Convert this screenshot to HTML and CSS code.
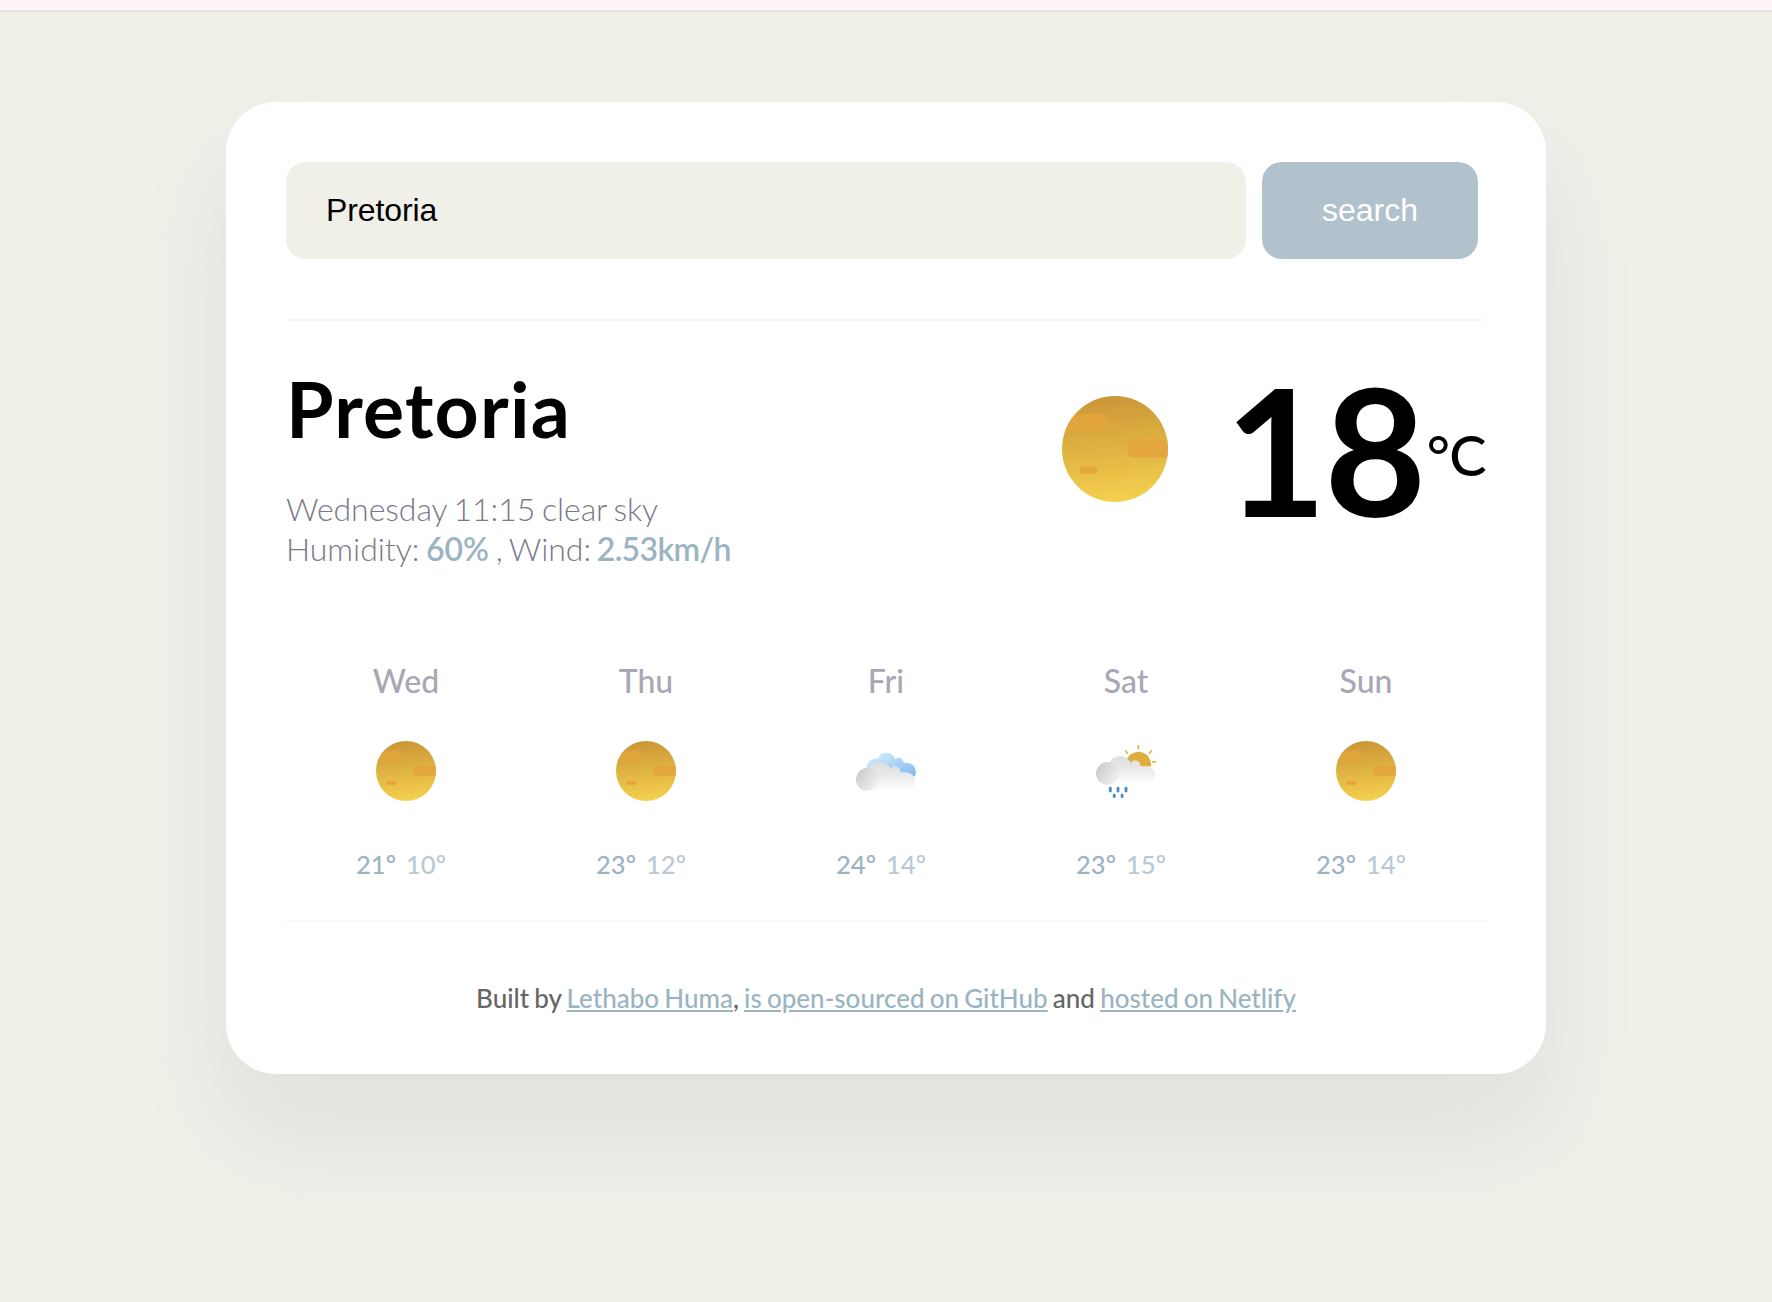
FILE: index.html
```
<!DOCTYPE html>
<html lang="en">
<head>
<meta charset="utf-8">
<title>Weather</title>
<link rel="stylesheet" href="styles.css">
</head>
<body>
<svg class="defs" width="0" height="0" aria-hidden="true">
  <defs>
    <linearGradient id="sun-fill" x1="0.45" y1="0" x2="0.55" y2="1">
      <stop offset="0" stop-color="#cb9637"/><stop offset="1" stop-color="#f5d14f"/>
    </linearGradient>
    <linearGradient id="sky-fill" gradientUnits="userSpaceOnUse" x1="28" y1="11" x2="44" y2="42">
      <stop offset="0" stop-color="#cde7fc"/><stop offset="1" stop-color="#80bced"/>
    </linearGradient>
    <linearGradient id="cloud-fill" gradientUnits="userSpaceOnUse" x1="0" y1="18" x2="0" y2="49">
      <stop offset="0" stop-color="#dcdcdc"/><stop offset="0.5" stop-color="#e8e8e8"/><stop offset="1" stop-color="#fff"/>
    </linearGradient>
    <linearGradient id="puff-fill" x1="0.1" y1="0.2" x2="0.9" y2="0.8">
      <stop offset="0" stop-color="#cdcdcd"/><stop offset="1" stop-color="#efefef"/>
    </linearGradient>
    <clipPath id="disc"><circle cx="53" cy="53" r="53"/></clipPath>
    <symbol id="clear" viewBox="0 0 106 106">
      <circle cx="53" cy="53" r="53" fill="url(#sun-fill)"/>
      <g clip-path="url(#disc)" fill="#e4a43d" opacity="0.85">
        <rect x="-10" y="17.7" width="56" height="18.3" rx="9"/>
        <rect x="65" y="44" width="60" height="17.5" rx="8"/>
        <rect x="18" y="70.7" width="17.7" height="7" rx="3.5"/>
      </g>
    </symbol>
    <symbol id="cloud" viewBox="0 0 60 60">
      <path d="M11 49.7V38.5L12.3 30.7A12 12 0 0 1 34.9 28A5 5 0 0 1 44.2 31.2H50A9.2 9.2 0 0 1 50 49.7Z" fill="url(#cloud-fill)"/>
      <circle cx="11.2" cy="38.4" r="11.3" fill="url(#puff-fill)"/>
    </symbol>
    <symbol id="cloudy" viewBox="0 0 60 60">
      <path d="M10.5 27A9.2 9.2 0 0 1 21.7 17.8A9.2 9.2 0 0 1 39.2 18.2A5 5 0 0 1 47.6 21.8H51A9 9 0 0 1 60 30.8Q60 34 58 36V40H20Z" fill="url(#sky-fill)"/>
      <use href="#cloud" width="60" height="60"/>
    </symbol>
    <symbol id="shower" viewBox="0 0 60 60">
      <path d="M42.3 4.8V7.6M29.6 10L31.4 12.2M55.3 10L53.4 12.2M56.8 20.8H59.2" fill="none" stroke="#e6b041" stroke-width="1.7" stroke-linecap="round"/>
      <path d="M29.8 21.7A12.6 12.6 0 1 1 55 25.5H32Z" fill="#deae40"/>
      <use href="#cloud" y="-6" width="60" height="60"/>
      <path d="M14.3 47.1V50.1M22 47.1V50.1M30 47.1V50.1M18.2 54.3V55.5M26.1 54.3V55.5" fill="none" stroke="#4b8bbf" stroke-width="2.9" stroke-linecap="round"/>
    </symbol>
  </defs>
</svg>
<div class="top-strip"></div>
<main class="card">
  <form class="search">
    <input class="search-input" type="text" value="Pretoria" aria-label="City">
    <button class="search-button" type="button">search</button>
  </form>
  <section class="current">
    <div>
      <h1 class="city">Pretoria</h1>
      <p class="details">Wednesday 11:15 clear sky<br>Humidity: <strong class="humidity">60%</strong> , Wind: <strong class="wind">2.53km/h</strong></p>
    </div>
    <div class="temperature">
      <svg class="current-icon"><use href="#clear"/></svg>
      <span class="value">18</span>
      <span class="unit">°C</span>
    </div>
  </section>
  <section class="forecast">
    <div class="day"><div class="name">Wed</div><svg class="icon"><use href="#clear"/></svg><div class="range"><span class="max">21º</span><span class="min">10º</span></div></div>
    <div class="day"><div class="name">Thu</div><svg class="icon"><use href="#clear"/></svg><div class="range"><span class="max">23º</span><span class="min">12º</span></div></div>
    <div class="day"><div class="name">Fri</div><svg class="icon"><use href="#cloudy"/></svg><div class="range"><span class="max">24º</span><span class="min">14º</span></div></div>
    <div class="day"><div class="name">Sat</div><svg class="icon"><use href="#shower"/></svg><div class="range"><span class="max">23º</span><span class="min">15º</span></div></div>
    <div class="day"><div class="name">Sun</div><svg class="icon"><use href="#clear"/></svg><div class="range"><span class="max">23º</span><span class="min">14º</span></div></div>
  </section>
  <footer class="footer">Built by <a href="#">Lethabo Huma</a>, <a href="#">is open-sourced on GitHub</a> and <a href="#">hosted on Netlify</a></footer>
</main>
</body>
</html>
```
FILE: styles.css
```
* { box-sizing: border-box; }

body {
  margin: 0;
  min-height: 1302px;
  background: #f0efe8;
  font-family: Lato, sans-serif;
  color: #000;
}

.defs { position: absolute; }

.top-strip {
  height: 12px;
  background: #fdf6f9;
  border-bottom: 2px solid #e8e0e4;
}

.card {
  width: 1320px;
  height: 972px;
  margin: 90px auto 0;
  padding: 60px;
  background: #fff;
  border-radius: 50px;
  box-shadow: 0 60px 100px rgba(65, 50, 100, 0.08);
}

.search {
  display: flex;
  gap: 16px;
  padding: 0 8px 60px 0;
}

.search-input,
.search-button {
  height: 97px;
  border: 0;
  border-radius: 20px;
  font: 32px "Liberation Sans", Arial, sans-serif;
}

.search-input {
  width: 960px;
  padding: 0 40px;
  background: #f0efe8;
  color: #000;
  letter-spacing: -0.1px;
}

.search-button {
  width: 216px;
  padding: 0;
  background: #b1c2cc;
  color: #fff;
}

.current {
  display: flex;
  justify-content: space-between;
  height: 300px;
  padding-top: 40px;
  border-top: 2px solid #f8f8f8;
}

.city {
  margin: 1px 0 35px;
  font-size: 77px;
  font-weight: 700;
  line-height: 92px;
  letter-spacing: 1.2px;
}

.details {
  margin: 0;
  font-size: 32px;
  font-weight: 300;
  line-height: 40px;
  letter-spacing: -0.05px;
  word-spacing: -1.9px;
  color: #7b7888;
}

.details strong {
  font-weight: 600;
  color: #9bb4c1;
}

.details .wind {
  margin-left: -1px;
  letter-spacing: -0.65px;
}

.temperature {
  display: flex;
  align-items: flex-start;
  line-height: 1;
}

.current-icon {
  width: 106px;
  height: 106px;
  margin: 35px 57px 0 0;
}

.value {
  font-size: 176px;
  font-weight: 700;
  letter-spacing: -2.5px;
}

.unit {
  margin: 66px 0 0 3px;
  font-size: 56px;
  font-weight: 500;
  letter-spacing: -0.7px;
}

.forecast {
  display: grid;
  grid-template-columns: repeat(5, 1fr);
  padding: 43px 0 40px;
  border-bottom: 2px solid #f8f8f8;
}

.day {
  display: flex;
  flex-direction: column;
  align-items: center;
}

.name {
  font-size: 32px;
  font-weight: 500;
  line-height: 38px;
  color: #a9a7b3;
}

.icon {
  width: 60px;
  height: 60px;
  margin: 41px 0 48px;
}

.range {
  display: flex;
  font-size: 25.6px;
  font-weight: 500;
  line-height: 31px;
}

.max,
.min {
  width: 40px;
  margin-right: 10px;
  color: #9bb4c1;
}

.min { color: #b9cad3; }

.footer {
  padding-top: 61px;
  font-size: 26px;
  font-weight: 500;
  line-height: 31px;
  text-align: center;
  word-spacing: -1.4px;
  color: #666;
}

.footer a { color: #9bb4c1; }
```
